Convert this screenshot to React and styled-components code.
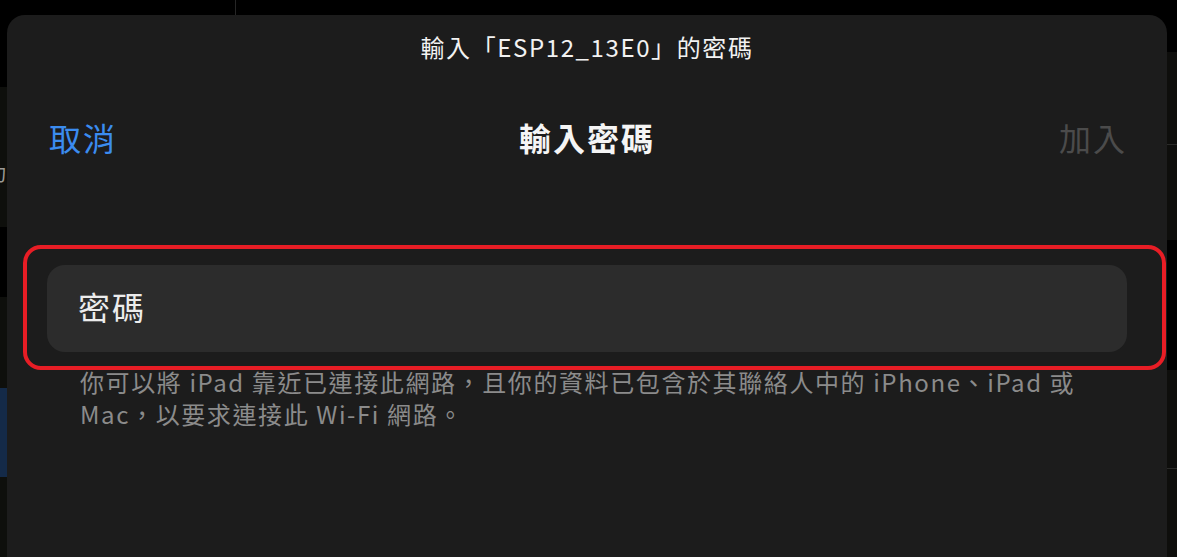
import React from "react";
import styled, { createGlobalStyle } from "styled-components";

const Global = createGlobalStyle`
  html, body { margin: 0; padding: 0; background: #000; }
  body { overflow: hidden; font-family: "Noto Sans CJK TC", "Noto Sans", sans-serif; }
  #root { width: 1177px; height: 557px; }
`;

const Page = styled.div`
  display: flex;
  width: 1177px;
  height: 557px;
  background: #000;
  overflow: hidden;
`;

const Strip = styled.div`
  width: ${(p) => p.$w}px;
  flex: none;
  display: flex;
  flex-direction: column;
  overflow: hidden;
`;

const Seg = styled.div`
  height: ${(p) => p.$h}px;
  flex: none;
  background: ${(p) => p.$bg};
  box-sizing: border-box;
  overflow: hidden;
  display: flex;
  flex-direction: column;
  justify-content: flex-start;
`;

const SubSeg = styled.div`
  height: ${(p) => p.$h}px;
  flex: none;
  border-bottom: 1px solid #2a2a28;
`;

const EdgeGlyph = styled.span`
  margin-left: -14px;
  margin-top: 76px;
  font-size: 20px;
  line-height: 20px;
  color: #9a9a96;
  white-space: nowrap;
`;

const Main = styled.div`
  width: 1160px;
  flex: none;
  display: flex;
  flex-direction: column;
`;

const TopGap = styled.div`
  height: 15px;
  flex: none;
  display: flex;
  padding-left: 228px;
`;

const TopDivider = styled.div`
  width: 1px;
  height: 100%;
  background: #262626;
`;

const Sheet = styled.div`
  flex: 1;
  background: #1c1c1c;
  border-radius: 18px 18px 0 0;
  display: flex;
  flex-direction: column;
`;

const Prompt = styled.div`
  padding-top: 17px;
  height: 30px;
  line-height: 30px;
  text-align: center;
  font-size: 24px;
  letter-spacing: 1.6px;
  color: #f2f2f2;
`;

const NavBar = styled.div`
  margin-top: 55px;
  height: 40px;
  padding: 0 42px;
  display: grid;
  grid-template-columns: 1fr auto 1fr;
  align-items: center;
`;

const NavButton = styled.span`
  font-size: 32px;
  line-height: 40px;
  letter-spacing: 2px;
  color: ${(p) => (p.$disabled ? "#4b4b4b" : "#3b8cf0")};
  justify-self: ${(p) => (p.$end ? "end" : "start")};
  margin-right: ${(p) => (p.$end ? "-2px" : "0")};
`;

const NavTitle = styled.span`
  font-size: 32px;
  line-height: 40px;
  font-weight: 700;
  letter-spacing: 2px;
  color: #f5f5f5;
`;

const FieldWrap = styled.div`
  position: relative;
  margin: 108px 40px 0;
`;

const Field = styled.div`
  height: 87px;
  box-sizing: border-box;
  padding: 0 0 5px 31px;
  border-radius: 18px;
  background: #2c2c2c;
  display: flex;
  align-items: center;
  font-size: 32px;
  letter-spacing: 2px;
  color: #ececec;
`;

const Highlight = styled.div`
  position: absolute;
  top: -20px;
  bottom: -18px;
  left: -24px;
  right: -39px;
  border: 4px solid #e81d25;
  border-radius: 18px;
  pointer-events: none;
`;

const Footnote = styled.p`
  margin: 14px 0 0;
  padding: 0 40px 0 73px;
  font-size: 24px;
  line-height: 32px;
  letter-spacing: 1.6px;
  color: #8b8b8b;
`;

export default function App() {
  return (
    <>
      <Global />
      <Page>
        <Strip $w={7}>
          <Seg $h={87} $bg="#000" />
          <Seg $h={140} $bg="#0e0f0c">
            <EdgeGlyph>功</EdgeGlyph>
          </Seg>
          <Seg $h={70} $bg="#000" />
          <Seg $h={91} $bg="#0e0f0c" />
          <Seg $h={89} $bg="#142a48" />
          <Seg $h={80} $bg="#0e0f0c" />
        </Strip>
        <Main>
          <TopGap>
            <TopDivider />
          </TopGap>
          <Sheet>
            <Prompt>輸入「ESP12_13E0」的密碼</Prompt>
            <NavBar>
              <NavButton>取消</NavButton>
              <NavTitle>輸入密碼</NavTitle>
              <NavButton $disabled $end>加入</NavButton>
            </NavBar>
            <FieldWrap>
              <Field>密碼</Field>
              <Highlight />
            </FieldWrap>
            <Footnote>
              你可以將 iPad 靠近已連接此網路，且你的資料已包含於其聯絡人中的 iPhone、iPad 或
              <br />
              Mac，以要求連接此 Wi-Fi 網路。
            </Footnote>
          </Sheet>
        </Main>
        <Strip $w={10}>
          <Seg $h={52} $bg="#000" />
          <Seg $h={188} $bg="#0e0e0c">
            <SubSeg $h={92} />
          </Seg>
          <Seg $h={130} $bg="#000" />
          <Seg $h={187} $bg="#0e0e0c">
            <SubSeg $h={98} />
          </Seg>
        </Strip>
      </Page>
    </>
  );
}
